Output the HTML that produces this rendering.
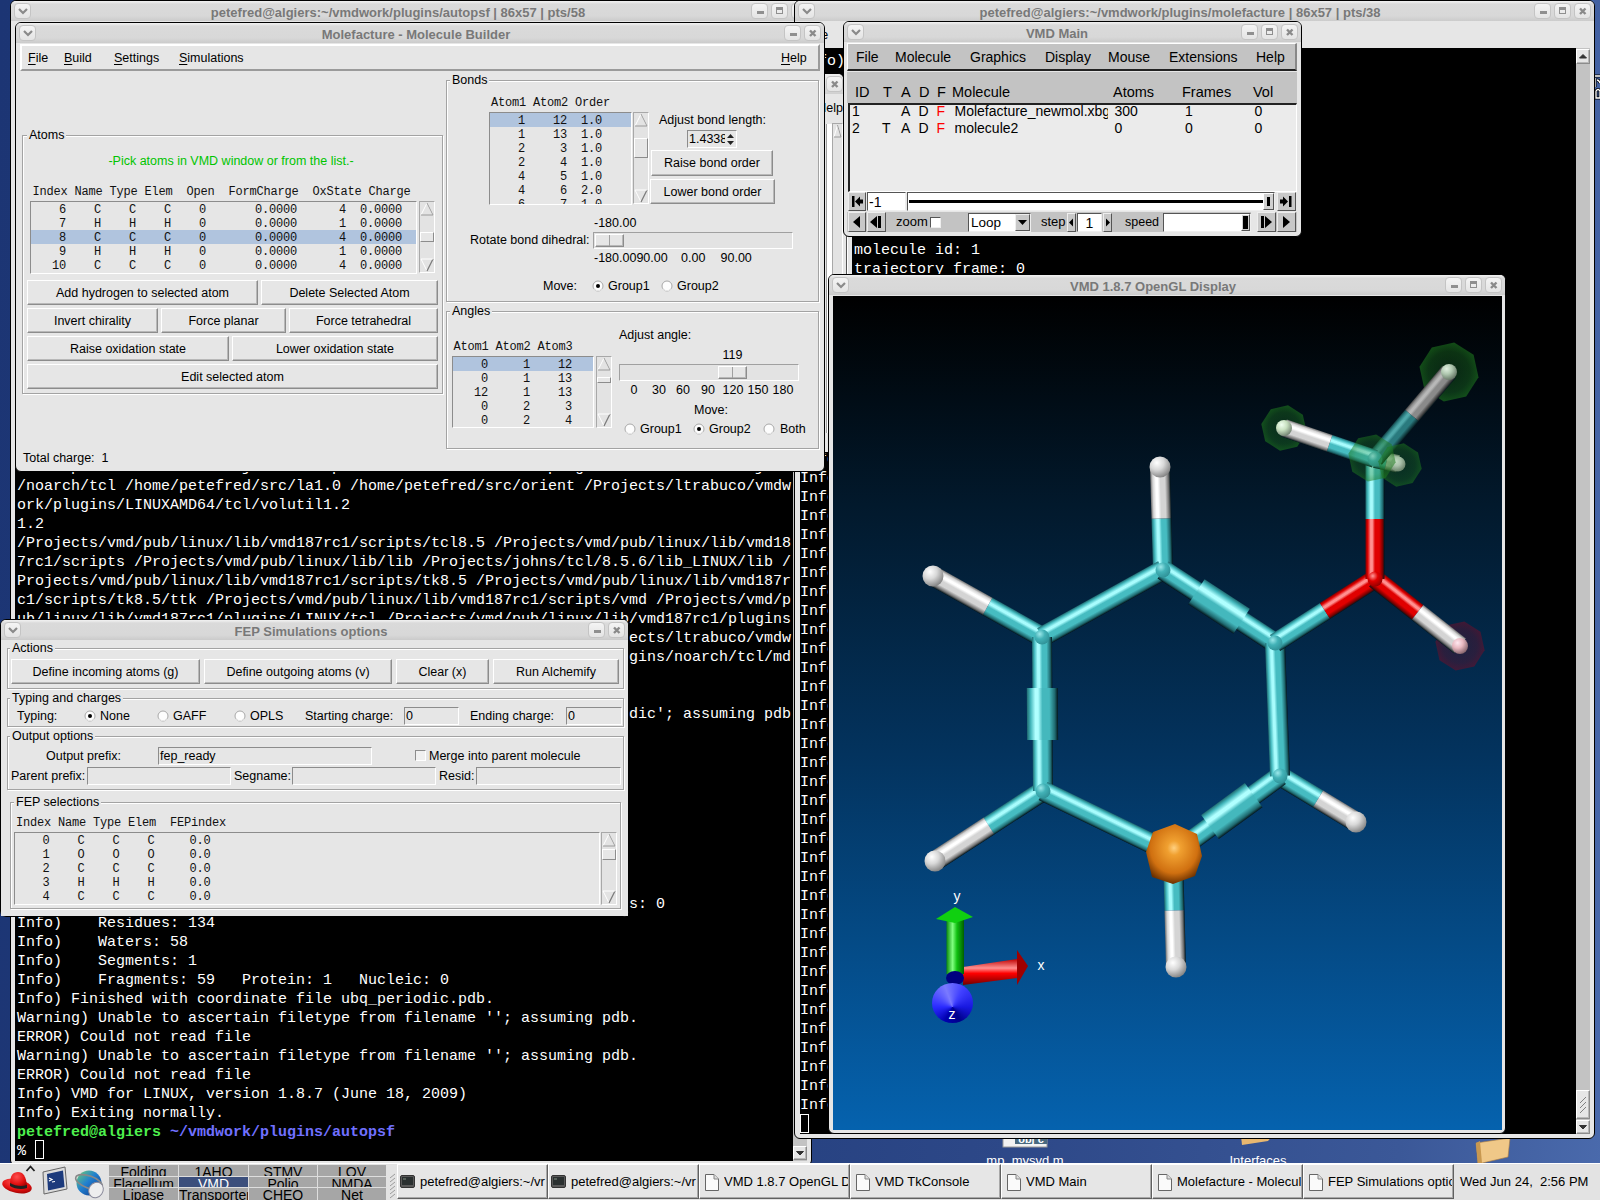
<!DOCTYPE html><html><head><meta charset="utf-8"><style>
*{box-sizing:border-box}
html,body{margin:0;padding:0}
body{width:1600px;height:1200px;position:relative;overflow:hidden;background:#1f3a78;font-family:"Liberation Sans",sans-serif;color:#000}
.a{position:absolute}
svg{display:block}
.t{white-space:pre}
.s{font-family:"Liberation Sans",sans-serif}
.sb{font-family:"Liberation Sans",sans-serif;font-weight:bold}
.m{font-family:"Liberation Mono",monospace}
.tm{font-family:"Liberation Mono",monospace;font-size:15px;line-height:19px;color:#fff;white-space:pre}
.lm{font-family:"Liberation Mono",monospace;font-size:12px;letter-spacing:-0.2px;line-height:14px;white-space:pre;padding-top:1px;height:14px;color:#111}
.tbtn{border:1px solid #c4c4c4;border-radius:4px;background:linear-gradient(#f4f4f4,#e4e4e4)}
.btn{background:#e6e6e6;border:1px solid;border-color:#fff #8c8c8c #8c8c8c #fff;box-shadow:inset -1px -1px 0 #b8b8b8}
.sunk{border:1px solid;border-color:#8c8c8c #fff #fff #8c8c8c}
.grp{border:1px solid;border-color:#a0a0a0 #fff #fff #a0a0a0;box-shadow:1px 1px 0 #a0a0a0 inset, -1px -1px 0 #fff inset}
</style></head><body><div class="a" style="left:0;top:0;width:1600px;height:1200px;background:linear-gradient(95deg,#1c3574 0%,#223d7c 40%,#2d4888 65%,#3b5898 88%,#4a6aac 100%)"></div><div class="a" style="left:1000px;top:1130px;width:50px;height:18px"><svg width="50" height="18"><rect x="3" y="1" width="44" height="16" fill="#f2f2f2" stroke="#999"/><rect x="15" y="1" width="32" height="13" fill="#4a6a80"/><text x="31" y="13" font-family="Liberation Sans" font-size="11" font-weight="bold" fill="#fff" text-anchor="middle">obj c</text></svg></div><div class="a t s" style="left:960px;width:130px;text-align:center;top:1153px;font-size:13px;line-height:16px;color:#fff">mp_mysvd.m</div><div class="a" style="left:1238px;top:1134px"><svg width="40" height="12"><path d="M3 2 L36 0 L30 7 L4 11Z" fill="#e8b870"/></svg></div><div class="a t s" style="left:1193px;width:130px;text-align:center;top:1153px;font-size:13px;line-height:16px;color:#fff">Interfaces</div><div class="a" style="left:1474px;top:1137px"><svg width="40" height="28"><path d="M2 6 L36 1 L34 20 L4 27 Z" fill="#f0c888" stroke="#b08040" stroke-width="0.6"/><path d="M2 6 L6 4 L8 26 L4 27Z" fill="#c89850"/></svg></div><div class="a" style="left:1594px;top:74px;width:6px;height:32px"><svg width="6" height="32"><path d="M1 2h5M1 4v9M3 6q2 0 3 3M2 17q2 -3 4 0v7h-4z" stroke="#000" stroke-width="3" fill="none"/><path d="M1 2h5M1 4v9M3 6q2 0 3 3M2 17q2 -3 4 0v7h-4z" stroke="#fff" stroke-width="1.3" fill="none"/></svg></div><div class="a" style="left:10px;top:0px;width:802px;height:1166px;overflow:hidden;"><div class="a " style="left:0px;top:0px;width:802px;height:1166px;background:#e6e6e6;border:1px solid #000;border-radius:6px 6px 6px 6px;box-sizing:border-box"></div><div class="a " style="left:1px;top:1px;width:800px;height:20px;background:linear-gradient(#f0f0f0 0px,#ececec 1px,#dadada 3px,#d8d8d8 75%,#cbcbcb 100%);border-radius:5px 5px 0 0"></div><div class="a tbtn" style="left:4px;top:3px;width:17px;height:16px;"><div style="position:absolute;left:3px;top:4px"><svg width="10" height="7" viewBox="0 0 10 7"><path d="M1 1 L5 5 L9 1" stroke="#8a8a8a" stroke-width="2.2" fill="none"/></svg></div></div><div class="a tbtn" style="left:741px;top:3px;width:17px;height:16px;"><div style="position:absolute;left:4.5px;top:7px;width:7px;height:3px;background:#8f8f8f"></div></div><div class="a tbtn" style="left:761px;top:3px;width:17px;height:16px;"><div style="position:absolute;left:4px;top:3px;width:7px;height:7px;border:1px solid #8f8f8f;border-top-width:3px;box-sizing:border-box"></div></div><div class="a tbtn" style="left:781px;top:3px;width:17px;height:16px;"><svg width="16" height="15" viewBox="0 0 16 15" style="position:absolute;left:0;top:0"><path d="M5 4.5 L10.5 10 M10.5 4.5 L5 10" stroke="#8a8a8a" stroke-width="2.4"/></svg></div><div class="a t sb" style="left:88px;width:600px;text-align:center;top:5.0px;font-size:13px;line-height:16px;color:#787878">petefred@algiers:~/vmdwork/plugins/autopsf | 86x57 | pts/58</div><div class="a " style="left:5px;top:48px;width:778px;height:1113px;background:#000"></div><div class="a " style="left:783px;top:48px;width:14px;height:1113px;background:#c3c3c3"></div><div class="a btn" style="left:783px;top:1146px;width:14px;height:14px;"><svg width="12" height="12" style="position:absolute;left:0;top:0"><path d="M2.5 4.5 L6 8 L9.5 4.5 Z" fill="#333" stroke="#333"/></svg></div><div class="a tm" style="left:7px;top:457.5px">c/scripts/tcl8.5/ttk /Projects/vmd/pub/linux/lib/vmd187rc1/plugins/noarch/tcl /Projects/</div><div class="a tm" style="left:7px;top:476.5px">/noarch/tcl /home/petefred/src/la1.0 /home/petefred/src/orient /Projects/ltrabuco/vmdw</div><div class="a tm" style="left:7px;top:495.5px">ork/plugins/LINUXAMD64/tcl/volutil1.2</div><div class="a tm" style="left:7px;top:514.5px">1.2</div><div class="a tm" style="left:7px;top:533.5px">/Projects/vmd/pub/linux/lib/vmd187rc1/scripts/tcl8.5 /Projects/vmd/pub/linux/lib/vmd18</div><div class="a tm" style="left:7px;top:552.5px">7rc1/scripts /Projects/vmd/pub/linux/lib/lib /Projects/johns/tcl/8.5.6/lib_LINUX/lib /</div><div class="a tm" style="left:7px;top:571.5px">Projects/vmd/pub/linux/lib/vmd187rc1/scripts/tk8.5 /Projects/vmd/pub/linux/lib/vmd187r</div><div class="a tm" style="left:7px;top:590.5px">c1/scripts/tk8.5/ttk /Projects/vmd/pub/linux/lib/vmd187rc1/scripts/vmd /Projects/vmd/p</div><div class="a tm" style="left:7px;top:609.5px">ub/linux/lib/vmd187rc1/plugins/LINUX/tcl /Projects/vmd/pub/linux/lib/vmd187rc1/plugins</div><div class="a tm" style="left:7px;top:628.5px">/noarch/tcl /home/petefred/src/la1.0 /home/petefred/src/orient /Projects/ltrabuco/vmdw</div><div class="a tm" style="left:7px;top:647.5px">ork/plugins/LINUXAMD64/tcl/volutil1.2 /home/petefred/vmdwork/plu    gins/noarch/tcl/md</div><div class="a tm" style="left:7px;top:704.5px">Warning) Unable to ascertain filetype from &#x27;ubq_perio               dic&#x27;; assuming pdb</div><div class="a tm" style="left:7px;top:894.5px">Info)    Unique Angle Types: 0  Unique Dihedral Types: 0  Impropers:s: 0</div><div class="a tm" style="left:7px;top:913.5px">Info)    Residues: 134</div><div class="a tm" style="left:7px;top:932.5px">Info)    Waters: 58</div><div class="a tm" style="left:7px;top:951.5px">Info)    Segments: 1</div><div class="a tm" style="left:7px;top:970.5px">Info)    Fragments: 59   Protein: 1   Nucleic: 0</div><div class="a tm" style="left:7px;top:989.5px">Info) Finished with coordinate file ubq_periodic.pdb.</div><div class="a tm" style="left:7px;top:1008.5px">Warning) Unable to ascertain filetype from filename &#x27;&#x27;; assuming pdb.</div><div class="a tm" style="left:7px;top:1027.5px">ERROR) Could not read file</div><div class="a tm" style="left:7px;top:1046.5px">Warning) Unable to ascertain filetype from filename &#x27;&#x27;; assuming pdb.</div><div class="a tm" style="left:7px;top:1065.5px">ERROR) Could not read file</div><div class="a tm" style="left:7px;top:1084.5px">Info) VMD for LINUX, version 1.8.7 (June 18, 2009)</div><div class="a tm" style="left:7px;top:1103.5px">Info) Exiting normally.</div><div class="a tm" style="left:7px;top:1122.5px;font-weight:bold"><span style="color:#4ef04e">petefred@algiers</span> <span style="color:#7070ff">~/vmdwork/plugins/autopsf</span></div><div class="a tm" style="left:7px;top:1141.5px">% </div><div class="a " style="left:25px;top:1140px;width:9px;height:19px;border:1px solid #fff"></div></div><div class="a" style="left:794px;top:0px;width:801px;height:1139px;overflow:hidden;"><div class="a " style="left:0px;top:0px;width:801px;height:1139px;background:#e6e6e6;border:1px solid #000;border-radius:6px 6px 6px 6px;box-sizing:border-box"></div><div class="a " style="left:1px;top:1px;width:799px;height:20px;background:linear-gradient(#f0f0f0 0px,#ececec 1px,#dadada 3px,#d8d8d8 75%,#cbcbcb 100%);border-radius:5px 5px 0 0"></div><div class="a tbtn" style="left:4px;top:3px;width:17px;height:16px;"><div style="position:absolute;left:3px;top:4px"><svg width="10" height="7" viewBox="0 0 10 7"><path d="M1 1 L5 5 L9 1" stroke="#8a8a8a" stroke-width="2.2" fill="none"/></svg></div></div><div class="a tbtn" style="left:740px;top:3px;width:17px;height:16px;"><div style="position:absolute;left:4.5px;top:7px;width:7px;height:3px;background:#8f8f8f"></div></div><div class="a tbtn" style="left:760px;top:3px;width:17px;height:16px;"><div style="position:absolute;left:4px;top:3px;width:7px;height:7px;border:1px solid #8f8f8f;border-top-width:3px;box-sizing:border-box"></div></div><div class="a tbtn" style="left:780px;top:3px;width:17px;height:16px;"><svg width="16" height="15" viewBox="0 0 16 15" style="position:absolute;left:0;top:0"><path d="M5 4.5 L10.5 10 M10.5 4.5 L5 10" stroke="#8a8a8a" stroke-width="2.4"/></svg></div><div class="a t sb" style="left:86px;width:600px;text-align:center;top:5.0px;font-size:13px;line-height:16px;color:#787878">petefred@algiers:~/vmdwork/plugins/molefacture | 86x57 | pts/38</div><div class="a t s" style="left:14px;top:27.0px;font-size:12.5px;line-height:16px;">File</div><div class="a " style="left:6px;top:48px;width:776px;height:1086px;background:#000"></div><div class="a " style="left:782px;top:48px;width:14px;height:1086px;background:#c3c3c3"></div><div class="a btn" style="left:782px;top:49px;width:14px;height:15px;"><svg width="12" height="13" style="position:absolute;left:0;top:0"><path d="M2.5 8 L6 4.5 L9.5 8 Z" fill="#333" stroke="#333"/></svg></div><div class="a btn" style="left:782px;top:1090px;width:14px;height:29px;"><svg width="12" height="27" style="position:absolute;left:0;top:0"><path d="M3 12 L9 6 M3 17 L9 11 M3 22 L9 16" stroke="#666" stroke-width="0.8"/></svg></div><div class="a btn" style="left:782px;top:1120px;width:14px;height:14px;"><svg width="12" height="12" style="position:absolute;left:0;top:0"><path d="M2.5 4.5 L6 8 L9.5 4.5 Z" fill="#333" stroke="#333"/></svg></div><div class="a tm" style="left:6px;top:431px">Info) </div><div class="a tm" style="left:6px;top:450px">Info) </div><div class="a tm" style="left:6px;top:469px">Info) </div><div class="a tm" style="left:6px;top:488px">Info) </div><div class="a tm" style="left:6px;top:507px">Info) </div><div class="a tm" style="left:6px;top:526px">Info) </div><div class="a tm" style="left:6px;top:545px">Info) </div><div class="a tm" style="left:6px;top:564px">Info) </div><div class="a tm" style="left:6px;top:583px">Info) </div><div class="a tm" style="left:6px;top:602px">Info) </div><div class="a tm" style="left:6px;top:621px">Info) </div><div class="a tm" style="left:6px;top:640px">Info) </div><div class="a tm" style="left:6px;top:659px">Info) </div><div class="a tm" style="left:6px;top:678px">Info) </div><div class="a tm" style="left:6px;top:697px">Info) </div><div class="a tm" style="left:6px;top:716px">Info) </div><div class="a tm" style="left:6px;top:735px">Info) </div><div class="a tm" style="left:6px;top:754px">Info) </div><div class="a tm" style="left:6px;top:773px">Info) </div><div class="a tm" style="left:6px;top:792px">Info) </div><div class="a tm" style="left:6px;top:811px">Info) </div><div class="a tm" style="left:6px;top:830px">Info) </div><div class="a tm" style="left:6px;top:849px">Info) </div><div class="a tm" style="left:6px;top:868px">Info) </div><div class="a tm" style="left:6px;top:887px">Info) </div><div class="a tm" style="left:6px;top:906px">Info) </div><div class="a tm" style="left:6px;top:925px">Info) </div><div class="a tm" style="left:6px;top:944px">Info) </div><div class="a tm" style="left:6px;top:963px">Info) </div><div class="a tm" style="left:6px;top:982px">Info) </div><div class="a tm" style="left:6px;top:1001px">Info) </div><div class="a tm" style="left:6px;top:1020px">Info) </div><div class="a tm" style="left:6px;top:1039px">Info) </div><div class="a tm" style="left:6px;top:1058px">Info) </div><div class="a tm" style="left:6px;top:1077px">Info) </div><div class="a tm" style="left:6px;top:1096px">Info) </div><div class="a " style="left:6px;top:1114px;width:9px;height:19px;border:1px solid #fff"></div><div class="a tm" style="left:6px;top:52px">Info) </div></div><div class="a" style="left:600px;top:73px;width:244px;height:380px;overflow:hidden;"><div class="a " style="left:0px;top:0px;width:244px;height:380px;background:#e6e6e6;border:1px solid #000;border-radius:6px 6px 0 0"></div><div class="a " style="left:1px;top:1px;width:242px;height:20px;background:linear-gradient(#ededed,#d5d5d5 85%,#cfcfcf);border-radius:5px 5px 0 0"></div><div class="a tbtn" style="left:206px;top:3px;width:17px;height:16px;"><div style="position:absolute;left:4px;top:3px;width:7px;height:7px;border:1px solid #8f8f8f;border-top-width:3px;box-sizing:border-box"></div></div><div class="a tbtn" style="left:226px;top:3px;width:17px;height:16px;"><svg width="16" height="15" viewBox="0 0 16 15" style="position:absolute;left:0;top:0"><path d="M5 4.5 L10.5 10 M10.5 4.5 L5 10" stroke="#8a8a8a" stroke-width="2.4"/></svg></div><div class="a t s" style="right:1px;top:27.0px;font-size:12.5px;line-height:16px;">Help</div><div class="a " style="left:226px;top:51px;width:6px;height:309px;background:#fff;border-left:1px solid #a0a0a0"></div><div class="a " style="left:232px;top:50px;width:11px;height:310px;background:#e3e3e3;border:1px solid;border-color:#a8a8a8 #fff #fff #a8a8a8"></div><svg class="a" style="left:233px;top:51px" width="9" height="14"><path d="M1 13 L4.5 1 L8 13" fill="none" stroke="#fff" stroke-width="1"/><path d="M4.5 1 L8 13 L1 13" fill="none" stroke="#9a9a9a" stroke-width="1"/></svg><svg class="a" style="left:233px;top:345px" width="9" height="14"><path d="M1 1 L4.5 13" fill="none" stroke="#fff" stroke-width="1"/><path d="M4.5 13 L8 1" fill="none" stroke="#7a7a7a" stroke-width="1.2"/><path d="M1 1 L8 1" stroke="#fff"/></svg></div><div class="a" style="left:843px;top:230px;width:460px;height:60px;overflow:hidden;"><div class="a " style="left:0px;top:0px;width:460px;height:60px;background:#e6e6e6"></div><div class="a " style="left:3px;top:0px;width:460px;height:60px;background:#e6e6e6;border-left:1px solid #555;box-shadow:inset 1px 0 0 #fff"></div><div class="a " style="left:9px;top:0px;width:460px;height:60px;background:#000"></div><div class="a tm" style="left:11px;top:11px">molecule id: 1</div><div class="a tm" style="left:11px;top:30px">trajectory frame: 0</div></div><div class="a" style="left:15px;top:22px;width:810px;height:450px;overflow:hidden;"><div class="a " style="left:0px;top:0px;width:810px;height:450px;background:#e6e6e6;border:1px solid #000;border-radius:6px 6px 6px 6px;box-sizing:border-box"></div><div class="a " style="left:1px;top:1px;width:808px;height:20px;background:linear-gradient(#f0f0f0 0px,#ececec 1px,#dadada 3px,#d8d8d8 75%,#cbcbcb 100%);border-radius:5px 5px 0 0"></div><div class="a tbtn" style="left:4px;top:3px;width:17px;height:16px;"><div style="position:absolute;left:3px;top:4px"><svg width="10" height="7" viewBox="0 0 10 7"><path d="M1 1 L5 5 L9 1" stroke="#8a8a8a" stroke-width="2.2" fill="none"/></svg></div></div><div class="a tbtn" style="left:769px;top:3px;width:17px;height:16px;"><div style="position:absolute;left:4.5px;top:7px;width:7px;height:3px;background:#8f8f8f"></div></div><div class="a tbtn" style="left:789px;top:3px;width:17px;height:16px;"><svg width="16" height="15" viewBox="0 0 16 15" style="position:absolute;left:0;top:0"><path d="M5 4.5 L10.5 10 M10.5 4.5 L5 10" stroke="#8a8a8a" stroke-width="2.4"/></svg></div><div class="a t sb" style="left:101px;width:600px;text-align:center;top:5.0px;font-size:13px;line-height:16px;color:#787878">Molefacture - Molecule Builder</div><div class="a " style="left:5px;top:22px;width:800px;height:27px;background:#e6e6e6;border:2px solid;border-color:#fff #9a9a9a #9a9a9a #fff"></div><div class="a t s" style="left:13px;top:27.5px;font-size:12.5px;line-height:16px;"><u style="text-underline-offset:2px">F</u>ile</div><div class="a t s" style="left:49px;top:27.5px;font-size:12.5px;line-height:16px;"><u style="text-underline-offset:2px">B</u>uild</div><div class="a t s" style="left:99px;top:27.5px;font-size:12.5px;line-height:16px;"><u style="text-underline-offset:2px">S</u>ettings</div><div class="a t s" style="left:164px;top:27.5px;font-size:12.5px;line-height:16px;"><u style="text-underline-offset:2px">S</u>imulations</div><div class="a t s" style="left:766px;top:27.5px;font-size:12.5px;line-height:16px;"><u style="text-underline-offset:2px">H</u>elp</div><div class="a " style="left:7px;top:113px;width:421px;height:259px;border:1px solid #a3a3a3;box-shadow:1px 1px 0 #fff, inset 1px 1px 0 #fff"></div><div class="a t s" style="left:12px;top:105px;font-size:12.5px;line-height:16px;background:#e6e6e6;padding:0 2px">Atoms</div><div class="a t s" style="left:-84px;width:600px;text-align:center;top:130.5px;font-size:12.5px;line-height:16px;color:#00c400">-Pick atoms in VMD window or from the list.-</div><div class="a lm" style="left:17.5px;top:161.5px">Index Name Type Elem  Open  FormCharge  OxState Charge</div><div class="a " style="left:15px;top:179px;width:387px;height:73px;border:1px solid;border-color:#8c8c8c #fff #fff #8c8c8c"></div><div class="a lm" style="left:16px;top:180px">    6    C    C    C    0       0.0000      4  0.0000</div><div class="a lm" style="left:16px;top:194px">    7    H    H    H    0       0.0000      1  0.0000</div><div class="a " style="left:16px;top:208px;width:385px;height:14px;background:#b0c4de"></div><div class="a lm" style="left:16px;top:208px">    8    C    C    C    0       0.0000      4  0.0000</div><div class="a lm" style="left:16px;top:222px">    9    H    H    H    0       0.0000      1  0.0000</div><div class="a lm" style="left:16px;top:236px">   10    C    C    C    0       0.0000      4  0.0000</div><div class="a " style="left:404px;top:179px;width:16px;height:72px;background:#e3e3e3;border:1px solid;border-color:#a8a8a8 #fff #fff #a8a8a8"></div><svg class="a" style="left:405px;top:180px" width="14" height="14"><path d="M1 13 L7.0 1 L13 13" fill="none" stroke="#fff" stroke-width="1"/><path d="M7.0 1 L13 13 L1 13" fill="none" stroke="#9a9a9a" stroke-width="1"/></svg><svg class="a" style="left:405px;top:236px" width="14" height="14"><path d="M1 1 L7.0 13" fill="none" stroke="#fff" stroke-width="1"/><path d="M7.0 13 L13 1" fill="none" stroke="#7a7a7a" stroke-width="1.2"/><path d="M1 1 L13 1" stroke="#fff"/></svg><div class="a " style="left:405px;top:210px;width:14px;height:10px;border:1px solid;border-color:#fff #8c8c8c #8c8c8c #fff;background:#e6e6e6"></div><div class="a btn" style="left:12px;top:258px;width:231px;height:25px;"></div><div class="a t s" style="left:-172.5px;width:600px;text-align:center;top:262.5px;font-size:12.5px;line-height:16px;">Add hydrogen to selected atom</div><div class="a btn" style="left:246px;top:258px;width:177px;height:25px;"></div><div class="a t s" style="left:34.5px;width:600px;text-align:center;top:262.5px;font-size:12.5px;line-height:16px;">Delete Selected Atom</div><div class="a btn" style="left:12px;top:286px;width:131px;height:25px;"></div><div class="a t s" style="left:-222.5px;width:600px;text-align:center;top:290.5px;font-size:12.5px;line-height:16px;">Invert chirality</div><div class="a btn" style="left:146px;top:286px;width:125px;height:25px;"></div><div class="a t s" style="left:-91.5px;width:600px;text-align:center;top:290.5px;font-size:12.5px;line-height:16px;">Force planar</div><div class="a btn" style="left:274px;top:286px;width:149px;height:25px;"></div><div class="a t s" style="left:48.5px;width:600px;text-align:center;top:290.5px;font-size:12.5px;line-height:16px;">Force tetrahedral</div><div class="a btn" style="left:12px;top:314px;width:202px;height:25px;"></div><div class="a t s" style="left:-187.0px;width:600px;text-align:center;top:318.5px;font-size:12.5px;line-height:16px;">Raise oxidation state</div><div class="a btn" style="left:217px;top:314px;width:206px;height:25px;"></div><div class="a t s" style="left:20.0px;width:600px;text-align:center;top:318.5px;font-size:12.5px;line-height:16px;">Lower oxidation state</div><div class="a btn" style="left:12px;top:342px;width:411px;height:25px;"></div><div class="a t s" style="left:-82.5px;width:600px;text-align:center;top:346.5px;font-size:12.5px;line-height:16px;">Edit selected atom</div><div class="a t s" style="left:8px;top:427.5px;font-size:12.5px;line-height:16px;">Total charge:  1</div><div class="a " style="left:431px;top:58px;width:373px;height:222px;border:1px solid #a3a3a3;box-shadow:1px 1px 0 #fff, inset 1px 1px 0 #fff"></div><div class="a t s" style="left:435px;top:50px;font-size:12.5px;line-height:16px;background:#e6e6e6;padding:0 2px">Bonds</div><div class="a lm" style="left:476px;top:72.5px">Atom1 Atom2 Order</div><div class="a " style="left:474px;top:90px;width:143px;height:93px;border:1px solid;border-color:#8c8c8c #fff #fff #8c8c8c;overflow:hidden"><div class="a lm" style="left:0;top:0px;width:141px;background:#b0c4de;">    1    12  1.0</div><div class="a lm" style="left:0;top:14px;width:141px;">    1    13  1.0</div><div class="a lm" style="left:0;top:28px;width:141px;">    2     3  1.0</div><div class="a lm" style="left:0;top:42px;width:141px;">    2     4  1.0</div><div class="a lm" style="left:0;top:56px;width:141px;">    4     5  1.0</div><div class="a lm" style="left:0;top:70px;width:141px;">    4     6  2.0</div><div class="a lm" style="left:0;top:84px;width:141px;">    6     7  1.0</div></div><div class="a " style="left:618px;top:90px;width:16px;height:92px;background:#e3e3e3;border:1px solid;border-color:#a8a8a8 #fff #fff #a8a8a8"></div><svg class="a" style="left:619px;top:91px" width="14" height="14"><path d="M1 13 L7.0 1 L13 13" fill="none" stroke="#fff" stroke-width="1"/><path d="M7.0 1 L13 13 L1 13" fill="none" stroke="#9a9a9a" stroke-width="1"/></svg><svg class="a" style="left:619px;top:167px" width="14" height="14"><path d="M1 1 L7.0 13" fill="none" stroke="#fff" stroke-width="1"/><path d="M7.0 13 L13 1" fill="none" stroke="#7a7a7a" stroke-width="1.2"/><path d="M1 1 L13 1" stroke="#fff"/></svg><div class="a " style="left:619px;top:116px;width:14px;height:20px;border:1px solid;border-color:#fff #8c8c8c #8c8c8c #fff;background:#e6e6e6"></div><div class="a t s" style="left:644px;top:89.5px;font-size:12.5px;line-height:16px;">Adjust bond length:</div><div class="a " style="left:672px;top:108px;width:50px;height:18px;background:#e6e6e6;border:1px solid;border-color:#8c8c8c #fff #fff #8c8c8c"></div><div class="a t s" style="left:674px;top:109.0px;font-size:12.5px;line-height:16px;">1.4338</div><div class="a " style="left:710px;top:109px;width:11px;height:16px;background:#e6e6e6"><svg width="11" height="16"><path d="M2 7 L5.5 3 L9 7Z M2 10 L5.5 14 L9 10Z" fill="#222"/></svg></div><div class="a btn" style="left:636px;top:128px;width:122px;height:26px;"></div><div class="a t s" style="left:397.0px;width:600px;text-align:center;top:133.0px;font-size:12.5px;line-height:16px;">Raise bond order</div><div class="a btn" style="left:635px;top:157px;width:125px;height:25px;"></div><div class="a t s" style="left:397.5px;width:600px;text-align:center;top:161.5px;font-size:12.5px;line-height:16px;">Lower bond order</div><div class="a t s" style="left:579px;top:192.5px;font-size:12.5px;line-height:16px;">-180.00</div><div class="a t s" style="left:455px;top:209.5px;font-size:12.5px;line-height:16px;">Rotate bond dihedral:</div><div class="a " style="left:578px;top:210px;width:200px;height:17px;background:#e3e3e3;border:1px solid;border-color:#a0a0a0 #fff #fff #a0a0a0"></div><div class="a btn" style="left:580px;top:212px;width:29px;height:13px;"><div style="position:absolute;left:13px;top:0;width:1px;height:11px;background:#a0a0a0"></div></div><div class="a t s" style="left:579px;top:227.5px;font-size:12.5px;line-height:16px;">-180.0090.00</div><div class="a t s" style="left:666px;top:227.5px;font-size:12.5px;line-height:16px;">0.00</div><div class="a t s" style="left:705.5px;top:227.5px;font-size:12.5px;line-height:16px;">90.00</div><div class="a t s" style="left:528px;top:255.5px;font-size:12.5px;line-height:16px;">Move:</div><svg class="a" style="left:577px;top:258px" width="12" height="12"><circle cx="6" cy="6" r="5" fill="#fdfdfd" stroke="#a8a8a8"/><path d="M1.8 8.5 A5 5 0 0 0 10.2 8.5" stroke="#ececec" fill="none"/><circle cx="6" cy="6" r="2" fill="#000"/></svg><div class="a t s" style="left:593px;top:255.5px;font-size:12.5px;line-height:16px;">Group1</div><svg class="a" style="left:646px;top:258px" width="12" height="12"><circle cx="6" cy="6" r="5" fill="#fdfdfd" stroke="#a8a8a8"/><path d="M1.8 8.5 A5 5 0 0 0 10.2 8.5" stroke="#ececec" fill="none"/></svg><div class="a t s" style="left:662px;top:255.5px;font-size:12.5px;line-height:16px;">Group2</div><div class="a " style="left:431px;top:289px;width:373px;height:138px;border:1px solid #a3a3a3;box-shadow:1px 1px 0 #fff, inset 1px 1px 0 #fff"></div><div class="a t s" style="left:435px;top:281px;font-size:12.5px;line-height:16px;background:#e6e6e6;padding:0 2px">Angles</div><div class="a lm" style="left:438.5px;top:317px">Atom1 Atom2 Atom3</div><div class="a " style="left:437px;top:334px;width:142px;height:72px;border:1px solid;border-color:#8c8c8c #fff #fff #8c8c8c;overflow:hidden"><div class="a lm" style="left:0;top:0px;width:140px;background:#b0c4de;">    0     1    12</div><div class="a lm" style="left:0;top:14px;width:140px;">    0     1    13</div><div class="a lm" style="left:0;top:28px;width:140px;">   12     1    13</div><div class="a lm" style="left:0;top:42px;width:140px;">    0     2     3</div><div class="a lm" style="left:0;top:56px;width:140px;">    0     2     4</div></div><div class="a " style="left:581px;top:334px;width:16px;height:72px;background:#e3e3e3;border:1px solid;border-color:#a8a8a8 #fff #fff #a8a8a8"></div><svg class="a" style="left:582px;top:335px" width="14" height="14"><path d="M1 13 L7.0 1 L13 13" fill="none" stroke="#fff" stroke-width="1"/><path d="M7.0 1 L13 13 L1 13" fill="none" stroke="#9a9a9a" stroke-width="1"/></svg><svg class="a" style="left:582px;top:391px" width="14" height="14"><path d="M1 1 L7.0 13" fill="none" stroke="#fff" stroke-width="1"/><path d="M7.0 13 L13 1" fill="none" stroke="#7a7a7a" stroke-width="1.2"/><path d="M1 1 L13 1" stroke="#fff"/></svg><div class="a " style="left:582px;top:355px;width:14px;height:6px;border:1px solid;border-color:#fff #8c8c8c #8c8c8c #fff;background:#e6e6e6"></div><div class="a t s" style="left:604px;top:304.5px;font-size:12.5px;line-height:16px;">Adjust angle:</div><div class="a t s" style="left:417.5px;width:600px;text-align:center;top:324.5px;font-size:12.5px;line-height:16px;">119</div><div class="a " style="left:604px;top:342px;width:180px;height:17px;background:#e3e3e3;border:1px solid;border-color:#a0a0a0 #fff #fff #a0a0a0"></div><div class="a btn" style="left:703px;top:344px;width:29px;height:13px;"><div style="position:absolute;left:13px;top:0;width:1px;height:11px;background:#a0a0a0"></div></div><div class="a t s" style="left:319px;width:600px;text-align:center;top:359.5px;font-size:12.5px;line-height:16px;">0</div><div class="a t s" style="left:344px;width:600px;text-align:center;top:359.5px;font-size:12.5px;line-height:16px;">30</div><div class="a t s" style="left:368px;width:600px;text-align:center;top:359.5px;font-size:12.5px;line-height:16px;">60</div><div class="a t s" style="left:393px;width:600px;text-align:center;top:359.5px;font-size:12.5px;line-height:16px;">90</div><div class="a t s" style="left:418px;width:600px;text-align:center;top:359.5px;font-size:12.5px;line-height:16px;">120</div><div class="a t s" style="left:443px;width:600px;text-align:center;top:359.5px;font-size:12.5px;line-height:16px;">150</div><div class="a t s" style="left:468px;width:600px;text-align:center;top:359.5px;font-size:12.5px;line-height:16px;">180</div><div class="a t s" style="left:396px;width:600px;text-align:center;top:379.5px;font-size:12.5px;line-height:16px;">Move:</div><svg class="a" style="left:609px;top:401px" width="12" height="12"><circle cx="6" cy="6" r="5" fill="#fdfdfd" stroke="#a8a8a8"/><path d="M1.8 8.5 A5 5 0 0 0 10.2 8.5" stroke="#ececec" fill="none"/></svg><div class="a t s" style="left:625px;top:398.5px;font-size:12.5px;line-height:16px;">Group1</div><svg class="a" style="left:678px;top:401px" width="12" height="12"><circle cx="6" cy="6" r="5" fill="#fdfdfd" stroke="#a8a8a8"/><path d="M1.8 8.5 A5 5 0 0 0 10.2 8.5" stroke="#ececec" fill="none"/><circle cx="6" cy="6" r="2" fill="#000"/></svg><div class="a t s" style="left:694px;top:398.5px;font-size:12.5px;line-height:16px;">Group2</div><svg class="a" style="left:748px;top:401px" width="12" height="12"><circle cx="6" cy="6" r="5" fill="#fdfdfd" stroke="#a8a8a8"/><path d="M1.8 8.5 A5 5 0 0 0 10.2 8.5" stroke="#ececec" fill="none"/></svg><div class="a t s" style="left:765px;top:398.5px;font-size:12.5px;line-height:16px;">Both</div></div><div class="a" style="left:843px;top:21px;width:459px;height:216px;overflow:hidden;"><div class="a " style="left:0px;top:0px;width:459px;height:216px;background:#e6e6e6;border:1px solid #000;border-radius:6px 6px 6px 6px;box-sizing:border-box"></div><div class="a " style="left:1px;top:1px;width:457px;height:20px;background:linear-gradient(#f0f0f0 0px,#ececec 1px,#dadada 3px,#d8d8d8 75%,#cbcbcb 100%);border-radius:5px 5px 0 0"></div><div class="a tbtn" style="left:4px;top:3px;width:17px;height:16px;"><div style="position:absolute;left:3px;top:4px"><svg width="10" height="7" viewBox="0 0 10 7"><path d="M1 1 L5 5 L9 1" stroke="#8a8a8a" stroke-width="2.2" fill="none"/></svg></div></div><div class="a tbtn" style="left:398px;top:3px;width:17px;height:16px;"><div style="position:absolute;left:4.5px;top:7px;width:7px;height:3px;background:#8f8f8f"></div></div><div class="a tbtn" style="left:418px;top:3px;width:17px;height:16px;"><div style="position:absolute;left:4px;top:3px;width:7px;height:7px;border:1px solid #8f8f8f;border-top-width:3px;box-sizing:border-box"></div></div><div class="a tbtn" style="left:438px;top:3px;width:17px;height:16px;"><svg width="16" height="15" viewBox="0 0 16 15" style="position:absolute;left:0;top:0"><path d="M5 4.5 L10.5 10 M10.5 4.5 L5 10" stroke="#8a8a8a" stroke-width="2.4"/></svg></div><div class="a t sb" style="left:-86px;width:600px;text-align:center;top:5.0px;font-size:13px;line-height:16px;color:#787878">VMD Main</div><div class="a " style="left:4px;top:22px;width:450px;height:28px;background:#c3c3c3;border-top:1px solid #fff;border-left:1px solid #fff;border-bottom:2px solid #222;border-right:2px solid #888"></div><div class="a t s" style="left:13px;top:26.5px;font-size:14px;line-height:18px;">File</div><div class="a t s" style="left:52px;top:26.5px;font-size:14px;line-height:18px;">Molecule</div><div class="a t s" style="left:127px;top:26.5px;font-size:14px;line-height:18px;">Graphics</div><div class="a t s" style="left:202px;top:26.5px;font-size:14px;line-height:18px;">Display</div><div class="a t s" style="left:265px;top:26.5px;font-size:14px;line-height:18px;">Mouse</div><div class="a t s" style="left:326px;top:26.5px;font-size:14px;line-height:18px;">Extensions</div><div class="a t s" style="left:413px;top:26.5px;font-size:14px;line-height:18px;">Help</div><div class="a " style="left:4px;top:51px;width:450px;height:31px;background:#c3c3c3"></div><div class="a t s" style="left:12px;top:61.5px;font-size:14.5px;line-height:18px;">ID</div><div class="a t s" style="left:40px;top:61.5px;font-size:14.5px;line-height:18px;">T</div><div class="a t s" style="left:58px;top:61.5px;font-size:14.5px;line-height:18px;">A</div><div class="a t s" style="left:76px;top:61.5px;font-size:14.5px;line-height:18px;">D</div><div class="a t s" style="left:94px;top:61.5px;font-size:14.5px;line-height:18px;">F</div><div class="a t s" style="left:109px;top:61.5px;font-size:14.5px;line-height:18px;">Molecule</div><div class="a t s" style="left:270px;top:61.5px;font-size:14.5px;line-height:18px;">Atoms</div><div class="a t s" style="left:339px;top:61.5px;font-size:14.5px;line-height:18px;">Frames</div><div class="a t s" style="left:410px;top:61.5px;font-size:14.5px;line-height:18px;">Vol</div><div class="a " style="left:5px;top:82px;width:449px;height:89px;background:#ebebeb;border-top:2px solid #222;border-left:2px solid #222;border-right:1px solid #fff;border-bottom:1px solid #fff"></div><div class="a t s" style="left:9px;top:81.0px;font-size:14px;line-height:18px;">1</div><div class="a t s" style="left:58px;top:81.0px;font-size:14px;line-height:18px;">A</div><div class="a t s" style="left:75.5px;top:81.0px;font-size:14px;line-height:18px;">D</div><div class="a t s" style="left:93.5px;top:81.0px;font-size:14px;line-height:18px;color:#f00">F</div><div class="a t s" style="left:111.5px;top:81px;font-size:14px;line-height:18px;width:153.5px;overflow:hidden">Molefacture_newmol.xbgf</div><div class="a t s" style="left:271.5px;top:81.0px;font-size:14px;line-height:18px;">300</div><div class="a t s" style="left:342px;top:81.0px;font-size:14px;line-height:18px;">1</div><div class="a t s" style="left:411.5px;top:81.0px;font-size:14px;line-height:18px;">0</div><div class="a t s" style="left:9px;top:97.5px;font-size:14px;line-height:18px;">2</div><div class="a t s" style="left:39px;top:97.5px;font-size:14px;line-height:18px;">T</div><div class="a t s" style="left:58px;top:97.5px;font-size:14px;line-height:18px;">A</div><div class="a t s" style="left:75.5px;top:97.5px;font-size:14px;line-height:18px;">D</div><div class="a t s" style="left:93.5px;top:97.5px;font-size:14px;line-height:18px;color:#f00">F</div><div class="a t s" style="left:111.5px;top:97.5px;font-size:14px;line-height:18px;width:153.5px;overflow:hidden">molecule2</div><div class="a t s" style="left:271.5px;top:97.5px;font-size:14px;line-height:18px;">0</div><div class="a t s" style="left:342px;top:97.5px;font-size:14px;line-height:18px;">0</div><div class="a t s" style="left:411.5px;top:97.5px;font-size:14px;line-height:18px;">0</div><div class="a " style="left:5px;top:171px;width:18px;height:19px;background:#c8c8c8;border:1px solid;border-color:#eee #555 #555 #eee"><svg width="16" height="17"><path d="M3 3h2.5v11H3z M6 8.5 L11 3.5 V6.5 H14 V10.5 H11 V13.5Z" fill="#000"/></svg></div><div class="a " style="left:24px;top:171px;width:39px;height:19px;background:#fff;border:1px solid;border-color:#555 #eee #eee #555"></div><div class="a t s" style="left:26px;top:171.5px;font-size:14px;line-height:18px;">-1</div><div class="a " style="left:64px;top:171px;width:368px;height:19px;background:#fff;border:1px solid;border-color:#555 #eee #eee #555"></div><div class="a " style="left:66px;top:179px;width:355px;height:3px;background:#000"></div><div class="a " style="left:420px;top:172px;width:11px;height:17px;background:#d0d0d0;border:1px solid;border-color:#fff #555 #555 #fff"><div style="position:absolute;left:3px;top:3px;width:3px;height:9px;background:#000"></div></div><div class="a " style="left:434px;top:171px;width:19px;height:19px;background:#c8c8c8;border:1px solid;border-color:#eee #555 #555 #eee"><svg width="17" height="17"><path d="M2 6.5 H5 V3.5 L10 8.5 L5 13.5 V10.5 H2Z M11 3h2.5v11H11z" fill="#000"/></svg></div><div class="a " style="left:4px;top:191px;width:450px;height:20px;background:#c3c3c3"></div><div class="a " style="left:5px;top:191px;width:18px;height:20px;background:#c8c8c8;border:1px solid;border-color:#eee #555 #555 #eee"><svg width="16" height="18"><path d="M4 9 L11 3 V15Z" fill="#000"/></svg></div><div class="a " style="left:24px;top:191px;width:19px;height:20px;background:#c8c8c8;border:1px solid;border-color:#eee #555 #555 #eee"><svg width="17" height="18"><path d="M2 9 L9 3 V15Z M10 3h3v12h-3z" fill="#000"/></svg></div><div class="a t s" style="left:53px;top:192.0px;font-size:13px;line-height:18px;">zoom</div><div class="a " style="left:87px;top:196px;width:11px;height:11px;background:#fff;border:1px solid;border-color:#555 #eee #eee #555"></div><div class="a " style="left:125px;top:192px;width:63px;height:19px;background:#fff;border:1px solid;border-color:#555 #eee #eee #555"></div><div class="a t s" style="left:128px;top:192.5px;font-size:13.5px;line-height:18px;">Loop</div><div class="a " style="left:172px;top:193px;width:15px;height:17px;background:#c8c8c8;border:1px solid;border-color:#eee #555 #555 #eee"><svg width="13" height="15"><path d="M2 5 H11 L6.5 10Z" fill="#000"/></svg></div><div class="a t s" style="left:198px;top:192.0px;font-size:13px;line-height:18px;">step</div><div class="a " style="left:224px;top:192px;width:9px;height:19px;background:#c8c8c8;border:1px solid;border-color:#eee #555 #555 #eee"><svg width="7" height="17"><path d="M1 8.5 L5 4.5 V12.5Z" fill="#000"/></svg></div><div class="a " style="left:234px;top:192px;width:25px;height:19px;background:#fff;border:1px solid;border-color:#555 #eee #eee #555"></div><div class="a t s" style="left:-53.5px;width:600px;text-align:center;top:192.5px;font-size:14px;line-height:18px;">1</div><div class="a " style="left:260px;top:192px;width:9px;height:19px;background:#c8c8c8;border:1px solid;border-color:#eee #555 #555 #eee"><svg width="7" height="17"><path d="M2 4.5 L6 8.5 L2 12.5Z" fill="#000"/></svg></div><div class="a t s" style="left:282px;top:192.0px;font-size:12.5px;line-height:18px;">speed</div><div class="a " style="left:320px;top:192px;width:88px;height:19px;background:#fff;border:1px solid;border-color:#555 #eee #eee #555"></div><div class="a " style="left:398px;top:193px;width:9px;height:17px;background:#d0d0d0;border:1px solid;border-color:#fff #555 #555 #fff"><div style="position:absolute;left:1px;top:1px;width:5px;height:13px;background:#000"></div></div><div class="a " style="left:408px;top:191px;width:6px;height:20px;background:#e6e6e6"></div><div class="a " style="left:414px;top:191px;width:19px;height:20px;background:#c8c8c8;border:1px solid;border-color:#eee #555 #555 #eee"><svg width="17" height="18"><path d="M3 3h3v12h-3z M7 3 L14 9 L7 15Z" fill="#000"/></svg></div><div class="a " style="left:434px;top:191px;width:19px;height:20px;background:#c8c8c8;border:1px solid;border-color:#eee #555 #555 #eee"><svg width="17" height="18"><path d="M5 3 L12 9 L5 15Z" fill="#000"/></svg></div></div><div class="a" style="left:828px;top:274px;width:678px;height:860px;overflow:hidden;"><div class="a " style="left:0px;top:0px;width:678px;height:860px;background:#e6e6e6;border:1px solid #000;border-radius:6px 6px 6px 6px;box-sizing:border-box"></div><div class="a " style="left:1px;top:1px;width:676px;height:20px;background:linear-gradient(#f0f0f0 0px,#ececec 1px,#dadada 3px,#d8d8d8 75%,#cbcbcb 100%);border-radius:5px 5px 0 0"></div><div class="a tbtn" style="left:4px;top:3px;width:17px;height:16px;"><div style="position:absolute;left:3px;top:4px"><svg width="10" height="7" viewBox="0 0 10 7"><path d="M1 1 L5 5 L9 1" stroke="#8a8a8a" stroke-width="2.2" fill="none"/></svg></div></div><div class="a tbtn" style="left:617px;top:3px;width:17px;height:16px;"><div style="position:absolute;left:4.5px;top:7px;width:7px;height:3px;background:#8f8f8f"></div></div><div class="a tbtn" style="left:637px;top:3px;width:17px;height:16px;"><div style="position:absolute;left:4px;top:3px;width:7px;height:7px;border:1px solid #8f8f8f;border-top-width:3px;box-sizing:border-box"></div></div><div class="a tbtn" style="left:657px;top:3px;width:17px;height:16px;"><svg width="16" height="15" viewBox="0 0 16 15" style="position:absolute;left:0;top:0"><path d="M5 4.5 L10.5 10 M10.5 4.5 L5 10" stroke="#8a8a8a" stroke-width="2.4"/></svg></div><div class="a t sb" style="left:25px;width:600px;text-align:center;top:5.0px;font-size:13px;line-height:16px;color:#787878">VMD 1.8.7 OpenGL Display</div><div class="a " style="left:5px;top:22px;width:669px;height:834px;background:linear-gradient(#000 0%,#02192c 25%,#03335e 55%,#0562ae 100%)"></div><div class="a" style="left:5px;top:22px;"><svg width="669" height="834"><defs><linearGradient id="gc" x1="0" y1="0" x2="0" y2="1"><stop offset="0" stop-color="#1f6a70"/><stop offset="0.12" stop-color="#46bcc1"/><stop offset="0.27" stop-color="#a8fcfd"/><stop offset="0.36" stop-color="#a8fcfd"/><stop offset="0.5" stop-color="#46bcc1"/><stop offset="0.72" stop-color="#46bcc1"/><stop offset="0.9" stop-color="#1f6a70"/><stop offset="1" stop-color="#03141a"/></linearGradient><linearGradient id="gh" x1="0" y1="0" x2="0" y2="1"><stop offset="0" stop-color="#707070"/><stop offset="0.12" stop-color="#d4d4d4"/><stop offset="0.27" stop-color="#ffffff"/><stop offset="0.36" stop-color="#ffffff"/><stop offset="0.5" stop-color="#d4d4d4"/><stop offset="0.72" stop-color="#d4d4d4"/><stop offset="0.9" stop-color="#707070"/><stop offset="1" stop-color="#03141a"/></linearGradient><linearGradient id="go" x1="0" y1="0" x2="0" y2="1"><stop offset="0" stop-color="#7a0000"/><stop offset="0.12" stop-color="#e00000"/><stop offset="0.27" stop-color="#ff9090"/><stop offset="0.36" stop-color="#ff9090"/><stop offset="0.5" stop-color="#e00000"/><stop offset="0.72" stop-color="#e00000"/><stop offset="0.9" stop-color="#7a0000"/><stop offset="1" stop-color="#03141a"/></linearGradient><linearGradient id="ghg" x1="0" y1="0" x2="0" y2="1"><stop offset="0" stop-color="#4a6a4a"/><stop offset="0.12" stop-color="#b8d4b0"/><stop offset="0.27" stop-color="#e8ffe0"/><stop offset="0.36" stop-color="#e8ffe0"/><stop offset="0.5" stop-color="#b8d4b0"/><stop offset="0.72" stop-color="#b8d4b0"/><stop offset="0.9" stop-color="#4a6a4a"/><stop offset="1" stop-color="#03141a"/></linearGradient><linearGradient id="gcg" x1="0" y1="0" x2="0" y2="1"><stop offset="0" stop-color="#1a5a4a"/><stop offset="0.12" stop-color="#2f8f7a"/><stop offset="0.27" stop-color="#70d0c0"/><stop offset="0.36" stop-color="#70d0c0"/><stop offset="0.5" stop-color="#2f8f7a"/><stop offset="0.72" stop-color="#2f8f7a"/><stop offset="0.9" stop-color="#1a5a4a"/><stop offset="1" stop-color="#03141a"/></linearGradient><linearGradient id="gcd" x1="0" y1="0" x2="0" y2="1"><stop offset="0" stop-color="#123c40"/><stop offset="0.12" stop-color="#2a7a7e"/><stop offset="0.27" stop-color="#4fa8aa"/><stop offset="0.36" stop-color="#4fa8aa"/><stop offset="0.5" stop-color="#2a7a7e"/><stop offset="0.72" stop-color="#2a7a7e"/><stop offset="0.9" stop-color="#123c40"/><stop offset="1" stop-color="#03141a"/></linearGradient><linearGradient id="ghd" x1="0" y1="0" x2="0" y2="1"><stop offset="0" stop-color="#404040"/><stop offset="0.12" stop-color="#8a8a8a"/><stop offset="0.27" stop-color="#b8b8b8"/><stop offset="0.36" stop-color="#b8b8b8"/><stop offset="0.5" stop-color="#8a8a8a"/><stop offset="0.72" stop-color="#8a8a8a"/><stop offset="0.9" stop-color="#404040"/><stop offset="1" stop-color="#03141a"/></linearGradient><linearGradient id="gcs" x1="0" y1="0" x2="0" y2="1"><stop offset="0" stop-color="#1f6a70"/><stop offset="0.12" stop-color="#44b8bd"/><stop offset="0.27" stop-color="#b0ffff"/><stop offset="0.36" stop-color="#b0ffff"/><stop offset="0.5" stop-color="#44b8bd"/><stop offset="0.72" stop-color="#44b8bd"/><stop offset="0.9" stop-color="#1f6a70"/><stop offset="1" stop-color="#03141a"/></linearGradient><radialGradient id="bl8" cx="0.5" cy="0.5" r="0.5"><stop offset="0" stop-color="#1e7a1e" stop-opacity="0.24750000000000003"/><stop offset="0.7" stop-color="#1e7a1e" stop-opacity="0.385"/><stop offset="1" stop-color="#1e7a1e" stop-opacity="0.6050000000000001"/></radialGradient><radialGradient id="bl9" cx="0.5" cy="0.5" r="0.5"><stop offset="0" stop-color="#1e7a1e" stop-opacity="0.24750000000000003"/><stop offset="0.7" stop-color="#1e7a1e" stop-opacity="0.385"/><stop offset="1" stop-color="#1e7a1e" stop-opacity="0.6050000000000001"/></radialGradient><radialGradient id="bl10" cx="0.5" cy="0.5" r="0.5"><stop offset="0" stop-color="#6a0f2a" stop-opacity="0.24750000000000003"/><stop offset="0.7" stop-color="#6a0f2a" stop-opacity="0.385"/><stop offset="1" stop-color="#6a0f2a" stop-opacity="0.6050000000000001"/></radialGradient><radialGradient id="b11" cx="0.35" cy="0.3" r="0.75"><stop offset="0" stop-color="#ffffff"/><stop offset="0.45" stop-color="#d8d8d8"/><stop offset="1" stop-color="#808080"/></radialGradient><radialGradient id="b12" cx="0.35" cy="0.3" r="0.75"><stop offset="0" stop-color="#ffffff"/><stop offset="0.45" stop-color="#d8d8d8"/><stop offset="1" stop-color="#808080"/></radialGradient><radialGradient id="b13" cx="0.35" cy="0.3" r="0.75"><stop offset="0" stop-color="#ffffff"/><stop offset="0.45" stop-color="#d8d8d8"/><stop offset="1" stop-color="#808080"/></radialGradient><radialGradient id="b14" cx="0.35" cy="0.3" r="0.75"><stop offset="0" stop-color="#ffffff"/><stop offset="0.45" stop-color="#d8d8d8"/><stop offset="1" stop-color="#808080"/></radialGradient><radialGradient id="b15" cx="0.35" cy="0.3" r="0.75"><stop offset="0" stop-color="#ffffff"/><stop offset="0.45" stop-color="#d8d8d8"/><stop offset="1" stop-color="#808080"/></radialGradient><radialGradient id="b16" cx="0.35" cy="0.3" r="0.75"><stop offset="0" stop-color="#ffe8f0"/><stop offset="0.45" stop-color="#e8b8c0"/><stop offset="1" stop-color="#806068"/></radialGradient><radialGradient id="b17" cx="0.35" cy="0.3" r="0.75"><stop offset="0" stop-color="#ffffff"/><stop offset="0.45" stop-color="#d8d8d8"/><stop offset="1" stop-color="#808080"/></radialGradient><radialGradient id="b18" cx="0.35" cy="0.3" r="0.75"><stop offset="0" stop-color="#e0f0e0"/><stop offset="0.45" stop-color="#b0c8b0"/><stop offset="1" stop-color="#607060"/></radialGradient><radialGradient id="b19" cx="0.35" cy="0.3" r="0.75"><stop offset="0" stop-color="#f0fff0"/><stop offset="0.45" stop-color="#c8e0c0"/><stop offset="1" stop-color="#708070"/></radialGradient><radialGradient id="b20" cx="0.35" cy="0.3" r="0.75"><stop offset="0" stop-color="#9be8ea"/><stop offset="0.45" stop-color="#42b2b7"/><stop offset="1" stop-color="#2f9096"/></radialGradient><radialGradient id="b21" cx="0.35" cy="0.3" r="0.75"><stop offset="0" stop-color="#9be8ea"/><stop offset="0.45" stop-color="#42b2b7"/><stop offset="1" stop-color="#2f9096"/></radialGradient><radialGradient id="b22" cx="0.35" cy="0.3" r="0.75"><stop offset="0" stop-color="#9be8ea"/><stop offset="0.45" stop-color="#42b2b7"/><stop offset="1" stop-color="#2f9096"/></radialGradient><radialGradient id="b23" cx="0.35" cy="0.3" r="0.75"><stop offset="0" stop-color="#9be8ea"/><stop offset="0.45" stop-color="#42b2b7"/><stop offset="1" stop-color="#2f9096"/></radialGradient><radialGradient id="b24" cx="0.35" cy="0.3" r="0.75"><stop offset="0" stop-color="#9be8ea"/><stop offset="0.45" stop-color="#42b2b7"/><stop offset="1" stop-color="#2f9096"/></radialGradient><radialGradient id="b25" cx="0.35" cy="0.3" r="0.75"><stop offset="0" stop-color="#ff9999"/><stop offset="0.45" stop-color="#e00000"/><stop offset="1" stop-color="#900000"/></radialGradient><radialGradient id="b26" cx="0.35" cy="0.3" r="0.75"><stop offset="0" stop-color="#9be8ea"/><stop offset="0.45" stop-color="#42b2b7"/><stop offset="1" stop-color="#2f9096"/></radialGradient><radialGradient id="bl27" cx="0.5" cy="0.5" r="0.5"><stop offset="0" stop-color="#1e7a1e" stop-opacity="0.225"/><stop offset="0.7" stop-color="#1e7a1e" stop-opacity="0.35"/><stop offset="1" stop-color="#1e7a1e" stop-opacity="0.55"/></radialGradient><radialGradient id="bl28" cx="0.5" cy="0.5" r="0.5"><stop offset="0" stop-color="#1e7a1e" stop-opacity="0.225"/><stop offset="0.7" stop-color="#1e7a1e" stop-opacity="0.35"/><stop offset="1" stop-color="#1e7a1e" stop-opacity="0.55"/></radialGradient><radialGradient id="orng" cx="0.5" cy="0.4" r="0.6"><stop offset="0" stop-color="#ffd080"/><stop offset="0.2" stop-color="#f0a030"/><stop offset="0.7" stop-color="#d07010"/><stop offset="1" stop-color="#6a3000"/></radialGradient><linearGradient id="agr" x1="0" y1="0" x2="1" y2="0"><stop offset="0" stop-color="#0a8a0a"/><stop offset="0.35" stop-color="#80ff80"/><stop offset="0.6" stop-color="#10c010"/><stop offset="1" stop-color="#006000"/></linearGradient><linearGradient id="arr" x1="0" y1="0" x2="0" y2="1"><stop offset="0" stop-color="#c00000"/><stop offset="0.35" stop-color="#ff9090"/><stop offset="0.55" stop-color="#ff0000"/><stop offset="1" stop-color="#700000"/></linearGradient><radialGradient id="abl" cx="0.5" cy="0.35" r="0.7"><stop offset="0" stop-color="#a0a0ff"/><stop offset="0.4" stop-color="#3030ff"/><stop offset="1" stop-color="#00007a"/></radialGradient></defs><polygon points="645.5,81.2 633.2,100.6 610.8,105.5 591.4,93.2 586.5,70.8 598.8,51.4 621.2,46.5 640.6,58.8" fill="url(#bl8)"/><polygon points="473.7,136.0 464.2,150.8 447.0,154.7 432.2,145.2 428.3,128.0 437.8,113.2 455.0,109.3 469.8,118.8" fill="url(#bl9)"/><polygon points="651.6,354.3 641.3,370.5 622.7,374.6 606.5,364.3 602.4,345.7 612.7,329.5 631.3,325.4 647.5,335.7" fill="url(#bl10)"/><g transform="translate(330.0,274.0) rotate(-91.67)"><rect x="0" y="-10.0" width="51.5" height="20" fill="url(#gc)"/></g><g transform="translate(328.5,222.5) rotate(-91.67)"><rect x="0" y="-10.0" width="51.5" height="20" fill="url(#gh)"/></g><circle cx="327.0" cy="171.0" r="10.5" fill="url(#b11)"/><g transform="translate(209.0,341.0) rotate(-150.77) scale(1,-1)"><rect x="0" y="-10.0" width="62.5" height="20" fill="url(#gc)"/></g><g transform="translate(154.5,310.5) rotate(-150.77) scale(1,-1)"><rect x="0" y="-10.0" width="62.5" height="20" fill="url(#gh)"/></g><circle cx="100.0" cy="280.0" r="10.5" fill="url(#b12)"/><g transform="translate(210.0,495.0) rotate(147.05) scale(1,-1)"><rect x="0" y="-10.0" width="64.4" height="20" fill="url(#gc)"/></g><g transform="translate(156.0,530.0) rotate(147.05) scale(1,-1)"><rect x="0" y="-10.0" width="64.4" height="20" fill="url(#gh)"/></g><circle cx="102.0" cy="565.0" r="10.5" fill="url(#b13)"/><g transform="translate(447.0,480.0) rotate(31.18)"><rect x="0" y="-10.0" width="44.4" height="20" fill="url(#gc)"/></g><g transform="translate(485.0,503.0) rotate(31.18)"><rect x="0" y="-10.0" width="44.4" height="20" fill="url(#gh)"/></g><circle cx="523.0" cy="526.0" r="10.5" fill="url(#b14)"/><g transform="translate(340.0,558.0) rotate(88.48) scale(1,-1)"><rect x="0" y="-10.0" width="56.5" height="20" fill="url(#gc)"/></g><g transform="translate(341.5,614.5) rotate(88.48) scale(1,-1)"><rect x="0" y="-10.0" width="56.5" height="20" fill="url(#gh)"/></g><circle cx="343.0" cy="671.0" r="10.5" fill="url(#b15)"/><g transform="translate(330.0,274.0) rotate(151.03) scale(1,-1)"><rect x="0" y="-10.0" width="138.3" height="20" fill="url(#gc)"/></g><g transform="translate(330.0,274.0) rotate(33.10)"><rect x="0" y="-10.0" width="133.7" height="20" fill="url(#gc)"/></g><g transform="translate(209.0,341.0) rotate(89.63) scale(1,-1)"><rect x="0" y="-10.0" width="154.0" height="20" fill="url(#gc)"/></g><g transform="translate(210.0,495.0) rotate(25.86)"><rect x="0" y="-10.0" width="144.5" height="20" fill="url(#gc)"/></g><g transform="translate(340.0,558.0) rotate(-36.09)"><rect x="0" y="-10.0" width="132.4" height="20" fill="url(#gc)"/></g><g transform="translate(447.0,480.0) rotate(-92.15)"><rect x="0" y="-10.0" width="133.1" height="20" fill="url(#gc)"/></g><g transform="translate(363.4,295.8) rotate(33.10)"><rect x="0" y="-15.0" width="54.0" height="30" fill="url(#gcs)"/></g><g transform="translate(209.3,392.0) rotate(89.63) scale(1,-1)"><rect x="0" y="-15.5" width="52.0" height="31" fill="url(#gcs)"/></g><g transform="translate(377.0,531.0) rotate(-36.09)"><rect x="0" y="-15.0" width="54.0" height="30" fill="url(#gcs)"/></g><g transform="translate(442.0,347.0) rotate(-32.62)"><rect x="0" y="-9.5" width="59.4" height="19" fill="url(#gc)"/></g><g transform="translate(492.0,315.0) rotate(-32.62)"><rect x="0" y="-9.5" width="59.4" height="19" fill="url(#go)"/></g><g transform="translate(542.0,283.0) rotate(38.25)"><rect x="0" y="-9.5" width="54.1" height="19" fill="url(#go)"/></g><g transform="translate(584.5,316.5) rotate(38.25)"><rect x="0" y="-9.5" width="54.1" height="19" fill="url(#gh)"/></g><circle cx="627.0" cy="350.0" r="8" fill="url(#b16)"/><g transform="translate(542.0,163.0) rotate(90.00) scale(1,-1)"><rect x="0" y="-9.5" width="60.0" height="19" fill="url(#gc)"/></g><g transform="translate(542.0,223.0) rotate(90.00) scale(1,-1)"><rect x="0" y="-9.5" width="60.0" height="19" fill="url(#go)"/></g><g transform="translate(542.0,163.0) rotate(12.26)"><rect x="0" y="-9.0" width="11.8" height="18" fill="url(#gc)"/></g><g transform="translate(553.5,165.5) rotate(12.26)"><rect x="0" y="-9.0" width="11.8" height="18" fill="url(#gh)"/></g><circle cx="565.0" cy="168.0" r="7.5" fill="url(#b17)"/><g transform="translate(542.0,163.0) rotate(-49.62)"><rect x="0" y="-9.0" width="57.1" height="18" fill="url(#gcd)"/></g><g transform="translate(579.0,119.5) rotate(-49.62)"><rect x="0" y="-9.0" width="57.1" height="18" fill="url(#ghd)"/></g><circle cx="616.0" cy="76.0" r="8" fill="url(#b18)"/><g transform="translate(542.0,163.0) rotate(-161.19) scale(1,-1)"><rect x="0" y="-9.0" width="48.1" height="18" fill="url(#gc)"/></g><g transform="translate(496.5,147.5) rotate(-161.19) scale(1,-1)"><rect x="0" y="-9.0" width="48.1" height="18" fill="url(#gh)"/></g><circle cx="451.0" cy="132.0" r="8" fill="url(#b19)"/><circle cx="330.0" cy="274.0" r="7.5" fill="url(#b20)"/><circle cx="209.0" cy="341.0" r="7.5" fill="url(#b21)"/><circle cx="210.0" cy="495.0" r="7.5" fill="url(#b22)"/><circle cx="447.0" cy="480.0" r="7.5" fill="url(#b23)"/><circle cx="442.0" cy="347.0" r="7.5" fill="url(#b24)"/><circle cx="542.0" cy="283.0" r="7.5" fill="url(#b25)"/><circle cx="542.0" cy="163.0" r="7.5" fill="url(#b26)"/><polygon points="588.7,172.8 579.6,187.0 563.2,190.7 549.0,181.6 545.3,165.2 554.4,151.0 570.8,147.3 585.0,156.4" fill="url(#bl27)"/><polygon points="562.6,166.2 552.8,181.7 534.8,185.6 519.3,175.8 515.4,157.8 525.2,142.3 543.2,138.4 558.7,148.2" fill="url(#bl28)"/><polygon points="313,556 320,536 342,528 364,538 369,560 362,580 340,588 319,581" fill="url(#orng)"/><polygon points="130.0,671.0 184.0,663.0 184.0,682.0 130.0,689.0" fill="url(#arr)"/><polygon points="184.0,654.0 195.0,670.0 184.0,689.0" fill="#a00000"/><rect x="113.5" y="623" width="17.5" height="55" fill="url(#agr)"/><polygon points="103.0,623.0 122.0,611.0 140.0,621.0 122.0,627.0" fill="#10d010"/><ellipse cx="122" cy="682" rx="9" ry="7" fill="#000080"/><text x="124" y="605" font-family="Liberation Sans" font-size="14" fill="#fff" text-anchor="middle">y</text><text x="208" y="674" font-family="Liberation Sans" font-size="14" fill="#fff" text-anchor="middle">x</text></svg></div><div class="a " style="left:103.5px;top:709px;width:41px;height:40px;border-radius:50%;background:conic-gradient(from -20deg at 50% 60%,#7a7aff 0deg,#4040ff 50deg,#1818e0 110deg,#00008a 170deg,#0000b0 230deg,#2a2aff 290deg,#7a7aff 360deg)"></div><svg class="a" style="left:116px;top:728px" width="16" height="24"><text x="8" y="17" font-family="Liberation Sans" font-size="14" fill="#fff" text-anchor="middle">z</text></svg></div><div class="a" style="left:0px;top:619px;width:629px;height:298px;overflow:hidden;"><div class="a " style="left:0px;top:0px;width:629px;height:298px;background:#e6e6e6;border:1px solid #000;border-radius:6px 6px 6px 6px;box-sizing:border-box"></div><div class="a " style="left:1px;top:1px;width:627px;height:20px;background:linear-gradient(#f0f0f0 0px,#ececec 1px,#dadada 3px,#d8d8d8 75%,#cbcbcb 100%);border-radius:5px 5px 0 0"></div><div class="a tbtn" style="left:4px;top:3px;width:17px;height:16px;"><div style="position:absolute;left:3px;top:4px"><svg width="10" height="7" viewBox="0 0 10 7"><path d="M1 1 L5 5 L9 1" stroke="#8a8a8a" stroke-width="2.2" fill="none"/></svg></div></div><div class="a tbtn" style="left:588px;top:3px;width:17px;height:16px;"><div style="position:absolute;left:4.5px;top:7px;width:7px;height:3px;background:#8f8f8f"></div></div><div class="a tbtn" style="left:608px;top:3px;width:17px;height:16px;"><svg width="16" height="15" viewBox="0 0 16 15" style="position:absolute;left:0;top:0"><path d="M5 4.5 L10.5 10 M10.5 4.5 L5 10" stroke="#8a8a8a" stroke-width="2.4"/></svg></div><div class="a t sb" style="left:11px;width:600px;text-align:center;top:5.0px;font-size:13px;line-height:16px;color:#787878">FEP Simulations options</div><div class="a " style="left:1px;top:21px;width:627px;height:276px;background:#e6e6e6"></div><div class="a " style="left:7px;top:29px;width:617px;height:41px;border:1px solid #a3a3a3;box-shadow:1px 1px 0 #fff, inset 1px 1px 0 #fff"></div><div class="a t s" style="left:10px;top:21px;font-size:12.5px;line-height:16px;background:#e6e6e6;padding:0 2px">Actions</div><div class="a btn" style="left:11px;top:40px;width:189px;height:25px;"></div><div class="a t s" style="left:-194.5px;width:600px;text-align:center;top:44.5px;font-size:12.5px;line-height:16px;">Define incoming atoms (g)</div><div class="a btn" style="left:204px;top:40px;width:188px;height:25px;"></div><div class="a t s" style="left:-2.0px;width:600px;text-align:center;top:44.5px;font-size:12.5px;line-height:16px;">Define outgoing atoms (v)</div><div class="a btn" style="left:396px;top:40px;width:93px;height:25px;"></div><div class="a t s" style="left:142.5px;width:600px;text-align:center;top:44.5px;font-size:12.5px;line-height:16px;">Clear (x)</div><div class="a btn" style="left:493px;top:40px;width:126px;height:25px;"></div><div class="a t s" style="left:256.0px;width:600px;text-align:center;top:44.5px;font-size:12.5px;line-height:16px;">Run Alchemify</div><div class="a " style="left:7px;top:79px;width:617px;height:29px;border:1px solid #a3a3a3;box-shadow:1px 1px 0 #fff, inset 1px 1px 0 #fff"></div><div class="a t s" style="left:10px;top:71px;font-size:12.5px;line-height:16px;background:#e6e6e6;padding:0 2px">Typing and charges</div><div class="a t s" style="left:17px;top:89.0px;font-size:12.5px;line-height:16px;">Typing:</div><svg class="a" style="left:84px;top:91px" width="12" height="12"><circle cx="6" cy="6" r="5" fill="#fdfdfd" stroke="#a8a8a8"/><path d="M1.8 8.5 A5 5 0 0 0 10.2 8.5" stroke="#ececec" fill="none"/><circle cx="6" cy="6" r="2" fill="#000"/></svg><div class="a t s" style="left:100px;top:89.0px;font-size:12.5px;line-height:16px;">None</div><svg class="a" style="left:156.5px;top:91px" width="12" height="12"><circle cx="6" cy="6" r="5" fill="#fdfdfd" stroke="#a8a8a8"/><path d="M1.8 8.5 A5 5 0 0 0 10.2 8.5" stroke="#ececec" fill="none"/></svg><div class="a t s" style="left:173px;top:89.0px;font-size:12.5px;line-height:16px;">GAFF</div><svg class="a" style="left:233.5px;top:91px" width="12" height="12"><circle cx="6" cy="6" r="5" fill="#fdfdfd" stroke="#a8a8a8"/><path d="M1.8 8.5 A5 5 0 0 0 10.2 8.5" stroke="#ececec" fill="none"/></svg><div class="a t s" style="left:250px;top:89.0px;font-size:12.5px;line-height:16px;">OPLS</div><div class="a t s" style="left:305px;top:89.0px;font-size:12.5px;line-height:16px;">Starting charge:</div><div class="a " style="left:404px;top:88px;width:55px;height:18px;background:#e6e6e6;border:1px solid;border-color:#8c8c8c #fff #fff #8c8c8c"></div><div class="a t s" style="left:406px;top:89.0px;font-size:12.5px;line-height:16px;">0</div><div class="a t s" style="left:470px;top:89.0px;font-size:12.5px;line-height:16px;">Ending charge:</div><div class="a " style="left:566px;top:88px;width:56px;height:18px;background:#e6e6e6;border:1px solid;border-color:#8c8c8c #fff #fff #8c8c8c"></div><div class="a t s" style="left:568px;top:89.0px;font-size:12.5px;line-height:16px;">0</div><div class="a " style="left:7px;top:117px;width:617px;height:54px;border:1px solid #a3a3a3;box-shadow:1px 1px 0 #fff, inset 1px 1px 0 #fff"></div><div class="a t s" style="left:10px;top:109px;font-size:12.5px;line-height:16px;background:#e6e6e6;padding:0 2px">Output options</div><div class="a t s" style="left:46px;top:129.0px;font-size:12.5px;line-height:16px;">Output prefix:</div><div class="a " style="left:158px;top:128px;width:214px;height:18px;background:#e6e6e6;border:1px solid;border-color:#8c8c8c #fff #fff #8c8c8c"></div><div class="a t s" style="left:160px;top:129.0px;font-size:12.5px;line-height:16px;">fep_ready</div><div class="a " style="left:415px;top:131px;width:11px;height:11px;background:#f0f0f0;border:1px solid;border-color:#8c8c8c #fff #fff #8c8c8c"></div><div class="a t s" style="left:429px;top:129.0px;font-size:12.5px;line-height:16px;">Merge into parent molecule</div><div class="a t s" style="left:11px;top:148.5px;font-size:12.5px;line-height:16px;">Parent prefix:</div><div class="a " style="left:87px;top:148px;width:144px;height:18px;background:#e6e6e6;border:1px solid;border-color:#8c8c8c #fff #fff #8c8c8c"></div><div class="a t s" style="left:234px;top:148.5px;font-size:12.5px;line-height:16px;">Segname:</div><div class="a " style="left:292px;top:148px;width:144px;height:18px;background:#e6e6e6;border:1px solid;border-color:#8c8c8c #fff #fff #8c8c8c"></div><div class="a t s" style="left:439px;top:148.5px;font-size:12.5px;line-height:16px;">Resid:</div><div class="a " style="left:476px;top:148px;width:145px;height:18px;background:#e6e6e6;border:1px solid;border-color:#8c8c8c #fff #fff #8c8c8c"></div><div class="a " style="left:10px;top:183px;width:611px;height:107px;border:1px solid #a3a3a3;box-shadow:1px 1px 0 #fff, inset 1px 1px 0 #fff"></div><div class="a t s" style="left:14px;top:175px;font-size:12.5px;line-height:16px;background:#e6e6e6;padding:0 2px">FEP selections</div><div class="a lm" style="left:16px;top:196px">Index Name Type Elem  FEPindex</div><div class="a " style="left:14px;top:213px;width:586px;height:73px;border:1px solid;border-color:#8c8c8c #fff #fff #8c8c8c"></div><div class="a lm" style="left:14.5px;top:214px">    0    C    C    C     0.0</div><div class="a lm" style="left:14.5px;top:228px">    1    O    O    O     0.0</div><div class="a lm" style="left:14.5px;top:242px">    2    C    C    C     0.0</div><div class="a lm" style="left:14.5px;top:256px">    3    H    H    H     0.0</div><div class="a lm" style="left:14.5px;top:270px">    4    C    C    C     0.0</div><div class="a " style="left:601px;top:213px;width:16px;height:73px;background:#e3e3e3;border:1px solid;border-color:#a8a8a8 #fff #fff #a8a8a8"></div><svg class="a" style="left:602px;top:214px" width="14" height="14"><path d="M1 13 L7.0 1 L13 13" fill="none" stroke="#fff" stroke-width="1"/><path d="M7.0 1 L13 13 L1 13" fill="none" stroke="#9a9a9a" stroke-width="1"/></svg><svg class="a" style="left:602px;top:271px" width="14" height="14"><path d="M1 1 L7.0 13" fill="none" stroke="#fff" stroke-width="1"/><path d="M7.0 13 L13 1" fill="none" stroke="#7a7a7a" stroke-width="1.2"/><path d="M1 1 L13 1" stroke="#fff"/></svg><div class="a " style="left:602px;top:230px;width:14px;height:11px;border:1px solid;border-color:#fff #8c8c8c #8c8c8c #fff;background:#e6e6e6"></div></div><div class="a" style="left:0px;top:1163px;width:1600px;height:37px;overflow:hidden;"><div class="a " style="left:0px;top:0px;width:1600px;height:37px;background:#e3e3e3;border-top:1px solid #fff"></div><div class="a" style="left:0px;top:0px;"><svg width="108" height="37">
<defs><radialGradient id="hatg" cx="0.4" cy="0.3" r="0.8"><stop offset="0" stop-color="#ff5050"/><stop offset="0.6" stop-color="#e01010"/><stop offset="1" stop-color="#900000"/></radialGradient>
<linearGradient id="globeg" x1="0" y1="0" x2="1" y2="1"><stop offset="0" stop-color="#70d070"/><stop offset="0.45" stop-color="#2080d0"/><stop offset="1" stop-color="#103080"/></linearGradient></defs>
<path d="M26.5 8 L30.5 3.5 L34.5 8" stroke="#222" stroke-width="1.8" fill="none"/>
<ellipse cx="17" cy="23" rx="15" ry="7" fill="url(#hatg)" transform="rotate(12 17 23)"/>
<path d="M10 22 C10 12 13 9 18 9 C23 9 26 13 27 23 C22 26 14 25 10 22Z" fill="url(#hatg)"/>
<path d="M10 20 C15 23 22 24 27 22 L27 25 C22 27 14 26 10 23Z" fill="#222"/>
<path d="M43 9 L65 4 L67 26 L44 31 Z" fill="#dcdcdc" stroke="#666" stroke-width="1"/>
<path d="M47 11 L63 7.5 L64.5 24 L48 27.5 Z" fill="#1c3a7c"/>
<path d="M49 15 L52 16.5 L49 18 M52 19 L55 18.5" stroke="#fff" stroke-width="1.2" fill="none"/>
<circle cx="89" cy="20" r="12.5" fill="url(#globeg)"/>
<ellipse cx="89" cy="19" rx="14" ry="6" fill="none" stroke="#888" stroke-width="1.6" transform="rotate(20 89 19)"/>
<ellipse cx="96" cy="27" rx="7" ry="8" fill="#eee" stroke="#889" stroke-width="1" transform="rotate(35 96 27)"/>
</svg></div><div class="a " style="left:109px;top:2px;width:277px;height:35px;background:#a6a6a6"></div><div class="a " style="left:178px;top:2px;width:1px;height:35px;background:#dedede"></div><div class="a " style="left:248px;top:2px;width:1px;height:35px;background:#dedede"></div><div class="a " style="left:317px;top:2px;width:1px;height:35px;background:#dedede"></div><div class="a " style="left:109px;top:13px;width:277px;height:1px;background:#dedede"></div><div class="a " style="left:109px;top:24px;width:277px;height:1px;background:#dedede"></div><div class="a " style="left:179px;top:14px;width:69px;height:10px;background:#3c4f7c"></div><div class="a" style="left:109px;top:2px;width:69px;height:11px;overflow:hidden"><div class="a t s" style="left:0;width:69px;text-align:center;top:-1.5px;font-size:14px;line-height:16px;color:#000">Folding</div></div><div class="a" style="left:179px;top:2px;width:69px;height:11px;overflow:hidden"><div class="a t s" style="left:0;width:69px;text-align:center;top:-1.5px;font-size:14px;line-height:16px;color:#000">1AHO</div></div><div class="a" style="left:249px;top:2px;width:68px;height:11px;overflow:hidden"><div class="a t s" style="left:0;width:68px;text-align:center;top:-1.5px;font-size:14px;line-height:16px;color:#000">STMV</div></div><div class="a" style="left:318px;top:2px;width:68px;height:11px;overflow:hidden"><div class="a t s" style="left:0;width:68px;text-align:center;top:-1.5px;font-size:14px;line-height:16px;color:#000">LOV</div></div><div class="a" style="left:109px;top:14px;width:69px;height:10px;overflow:hidden"><div class="a t s" style="left:0;width:69px;text-align:center;top:-1.5px;font-size:14px;line-height:16px;color:#000">Flagellum</div></div><div class="a" style="left:179px;top:14px;width:69px;height:10px;overflow:hidden"><div class="a t s" style="left:0;width:69px;text-align:center;top:-1.5px;font-size:14px;line-height:16px;color:#fff">VMD</div></div><div class="a" style="left:249px;top:14px;width:68px;height:10px;overflow:hidden"><div class="a t s" style="left:0;width:68px;text-align:center;top:-1.5px;font-size:14px;line-height:16px;color:#000">Polio</div></div><div class="a" style="left:318px;top:14px;width:68px;height:10px;overflow:hidden"><div class="a t s" style="left:0;width:68px;text-align:center;top:-1.5px;font-size:14px;line-height:16px;color:#000">NMDA</div></div><div class="a" style="left:109px;top:25px;width:69px;height:12px;overflow:hidden"><div class="a t s" style="left:0;width:69px;text-align:center;top:-1.5px;font-size:14px;line-height:16px;color:#000">Lipase</div></div><div class="a" style="left:179px;top:25px;width:69px;height:12px;overflow:hidden"><div class="a t s" style="left:0;width:69px;text-align:center;top:-1.5px;font-size:14px;line-height:16px;color:#000">Transporter</div></div><div class="a" style="left:249px;top:25px;width:68px;height:12px;overflow:hidden"><div class="a t s" style="left:0;width:68px;text-align:center;top:-1.5px;font-size:14px;line-height:16px;color:#000">CHEQ</div></div><div class="a" style="left:318px;top:25px;width:68px;height:12px;overflow:hidden"><div class="a t s" style="left:0;width:68px;text-align:center;top:-1.5px;font-size:14px;line-height:16px;color:#000">Net</div></div><svg class="a" style="left:389px;top:10px" width="8" height="26"><path d="M1 5 L6 1" stroke="#888" stroke-width="0.8"/><path d="M1 9 L6 5" stroke="#888" stroke-width="0.8"/><path d="M1 13 L6 9" stroke="#888" stroke-width="0.8"/><path d="M1 17 L6 13" stroke="#888" stroke-width="0.8"/><path d="M1 21 L6 17" stroke="#888" stroke-width="0.8"/><path d="M1 25 L6 21" stroke="#888" stroke-width="0.8"/></svg><div class="a " style="left:397px;top:1px;width:151px;height:35px;background:#e6e6e6;border:1px solid;border-color:#fff #606060 #606060 #fff;box-shadow:inset -1px -1px 0 #a8a8a8"></div><div class="a" style="left:400px;top:12px;"><svg width="16" height="14"><rect x="0.5" y="0.5" width="14" height="12" rx="1.5" fill="#5a5a5a" stroke="#333"/><rect x="2" y="2" width="11" height="8" fill="#2a3030"/><path d="M3 4h3" stroke="#9a9" stroke-width="0.8"/></svg></div><div class="a t s" style="left:420px;top:10px;font-size:13px;line-height:18px;width:126px;overflow:hidden">petefred@algiers:~/vr</div><div class="a " style="left:548px;top:1px;width:151px;height:35px;background:#e6e6e6;border:1px solid;border-color:#fff #606060 #606060 #fff;box-shadow:inset -1px -1px 0 #a8a8a8"></div><div class="a" style="left:551px;top:12px;"><svg width="16" height="14"><rect x="0.5" y="0.5" width="14" height="12" rx="1.5" fill="#5a5a5a" stroke="#333"/><rect x="2" y="2" width="11" height="8" fill="#2a3030"/><path d="M3 4h3" stroke="#9a9" stroke-width="0.8"/></svg></div><div class="a t s" style="left:571px;top:10px;font-size:13px;line-height:18px;width:126px;overflow:hidden">petefred@algiers:~/vr</div><div class="a " style="left:699px;top:1px;width:151px;height:35px;background:#e6e6e6;border:1px solid;border-color:#fff #606060 #606060 #fff;box-shadow:inset -1px -1px 0 #a8a8a8"></div><div class="a" style="left:705px;top:11px;"><svg width="14" height="17"><path d="M0.5 0.5 H9 L13.5 5 V16.5 H0.5Z" fill="#fafafa" stroke="#666"/><path d="M9 0.5 V5 H13.5" fill="#ddd" stroke="#888"/></svg></div><div class="a t s" style="left:724px;top:10px;font-size:13px;line-height:18px;width:124px;overflow:hidden">VMD 1.8.7 OpenGL D</div><div class="a " style="left:850px;top:1px;width:151px;height:35px;background:#e6e6e6;border:1px solid;border-color:#fff #606060 #606060 #fff;box-shadow:inset -1px -1px 0 #a8a8a8"></div><div class="a" style="left:856px;top:11px;"><svg width="14" height="17"><path d="M0.5 0.5 H9 L13.5 5 V16.5 H0.5Z" fill="#fafafa" stroke="#666"/><path d="M9 0.5 V5 H13.5" fill="#ddd" stroke="#888"/></svg></div><div class="a t s" style="left:875px;top:10px;font-size:13px;line-height:18px;width:124px;overflow:hidden">VMD TkConsole</div><div class="a " style="left:1001px;top:1px;width:151px;height:35px;background:#e6e6e6;border:1px solid;border-color:#fff #606060 #606060 #fff;box-shadow:inset -1px -1px 0 #a8a8a8"></div><div class="a" style="left:1007px;top:11px;"><svg width="14" height="17"><path d="M0.5 0.5 H9 L13.5 5 V16.5 H0.5Z" fill="#fafafa" stroke="#666"/><path d="M9 0.5 V5 H13.5" fill="#ddd" stroke="#888"/></svg></div><div class="a t s" style="left:1026px;top:10px;font-size:13px;line-height:18px;width:124px;overflow:hidden">VMD Main</div><div class="a " style="left:1152px;top:1px;width:151px;height:35px;background:#e6e6e6;border:1px solid;border-color:#fff #606060 #606060 #fff;box-shadow:inset -1px -1px 0 #a8a8a8"></div><div class="a" style="left:1158px;top:11px;"><svg width="14" height="17"><path d="M0.5 0.5 H9 L13.5 5 V16.5 H0.5Z" fill="#fafafa" stroke="#666"/><path d="M9 0.5 V5 H13.5" fill="#ddd" stroke="#888"/></svg></div><div class="a t s" style="left:1177px;top:10px;font-size:13px;line-height:18px;width:124px;overflow:hidden">Molefacture - Molecul</div><div class="a " style="left:1303px;top:1px;width:151px;height:35px;background:#e6e6e6;border:1px solid;border-color:#fff #606060 #606060 #fff;box-shadow:inset -1px -1px 0 #a8a8a8"></div><div class="a" style="left:1309px;top:11px;"><svg width="14" height="17"><path d="M0.5 0.5 H9 L13.5 5 V16.5 H0.5Z" fill="#fafafa" stroke="#666"/><path d="M9 0.5 V5 H13.5" fill="#ddd" stroke="#888"/></svg></div><div class="a t s" style="left:1328px;top:10px;font-size:13px;line-height:18px;width:124px;overflow:hidden">FEP Simulations optio</div><div class="a t s" style="left:1460px;top:10.0px;font-size:13px;line-height:18px;">Wed Jun 24,  2:56 PM</div></div></body></html>
